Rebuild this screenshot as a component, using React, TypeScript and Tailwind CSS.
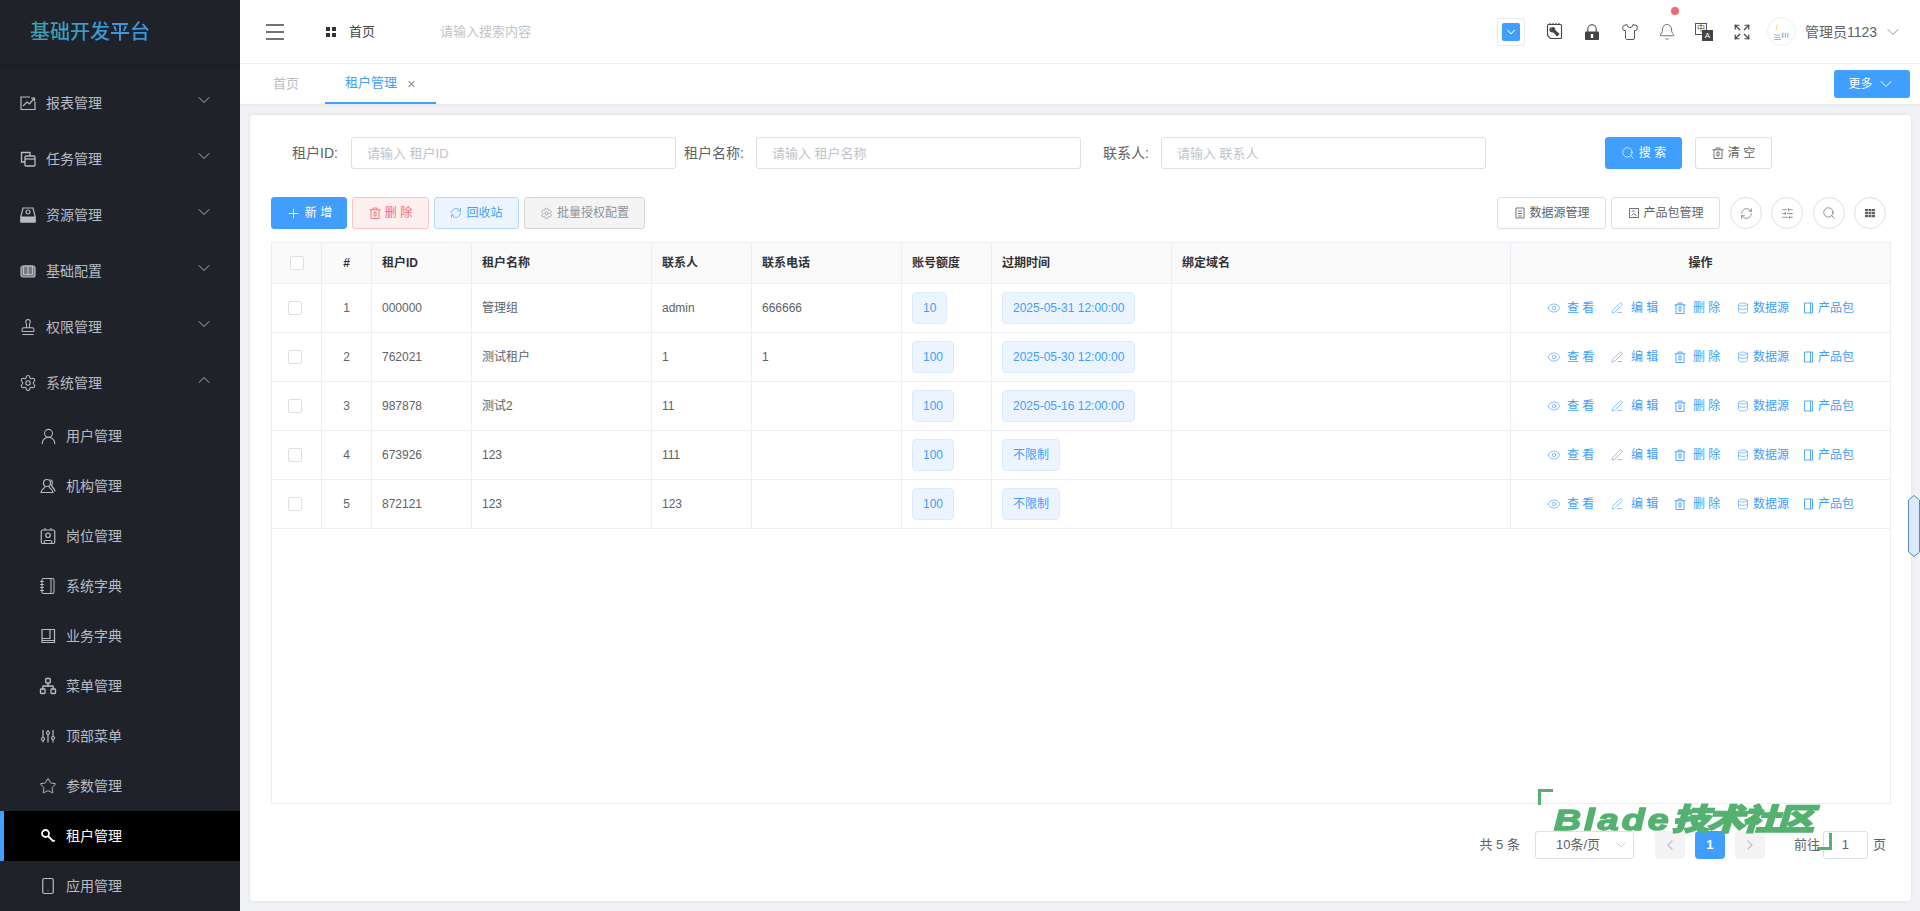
import type { ReactNode } from "react";
import {
  Bell,
  ChevronDown,
  ChevronLeft,
  ChevronRight,
  ChevronUp,
  Contact,
  Database,
  Expand,
  Eye,
  Network,
  Notebook,
  PenLine,
  RefreshCw,
  Search,
  Settings,
  Shirt,
  SlidersHorizontal,
  Smartphone,
  Stamp,
  Star,
  UserRound,
  Plus,
} from "lucide-react";

const ReportIcon = () => (
  <svg viewBox="0 0 16 16" className="w-4 h-4" fill="none" stroke="currentColor" strokeWidth="1.2">
    <path d="M15 7v7.5H1V2h9" />
    <path d="M3 11l4-4 2.5 2L14 3.5M11 3h3.5v3.5" />
  </svg>
);

const TaskIcon = () => (
  <svg viewBox="0 0 16 16" className="w-4 h-4" fill="none" stroke="currentColor" strokeWidth="1.3">
    <path d="M5 11H1.5V1.5H10V5" />
    <rect x="5" y="5" width="10" height="10" rx="1" />
    <path d="M5 8h10" />
  </svg>
);

const ResourceIcon = () => (
  <svg viewBox="0 0 16 16" className="w-4 h-4" fill="none" stroke="currentColor" strokeWidth="1.2">
    <path d="M3 1h10l2 8v6H1V9z" />
    <circle cx="8" cy="5" r="2" />
    <path d="M1 10h14v5H1z" fill="currentColor" />
  </svg>
);

const ConfigIcon = () => (
  <svg viewBox="0 0 16 16" className="w-4 h-4" fill="none" stroke="currentColor" strokeWidth="1.2">
    <rect x="1" y="3" width="14" height="11" rx="2" fill="currentColor" fillOpacity="0.55" />
    <path d="M8 3.5v9M3.5 3h4.5M8 3h4.5v8.5H8 3.5V3" />
  </svg>
);

const OrgIcon = () => (
  <svg viewBox="0 0 16 16" className="w-4 h-4" fill="none" stroke="currentColor" strokeWidth="1.2">
    <circle cx="7" cy="5" r="3.5" />
    <path d="M5 8.5c0 2-4 2.5-4 6h12c0-3.500-4-4-4-6" />
    <path d="M10.5 1.5c2 1 2.5 4 1 6 0 1.500 3.500 2.500 3.500 6" />
  </svg>
);

const BookIcon = () => (
  <svg viewBox="0 0 16 16" className="w-4 h-4" fill="none" stroke="currentColor" strokeWidth="1.2">
    <path d="M2 1.5h12.5v13H2z" />
    <path d="M10 1.5v9H2M2 12.5h12.5" />
  </svg>
);

const TopMenuIcon = () => (
  <svg viewBox="0 0 16 16" className="w-4 h-4" fill="none" stroke="currentColor" strokeWidth="1.2">
    <path d="M3 2v7M3 13v1.5M8 2v1M8 7v7.5M13 2v6M13 12v2.5" />
    <circle cx="3" cy="11" r="1.5" />
    <circle cx="8" cy="5" r="1.5" />
    <circle cx="13" cy="10" r="1.5" />
  </svg>
);

const KeyIcon = () => (
  <svg viewBox="0 0 16 16" className="w-4 h-4" fill="none" stroke="currentColor" strokeWidth="1.8">
    <circle cx="5.5" cy="5.5" r="3.5" />
    <path d="M8 8l5 5 2-.5" />
  </svg>
);

const TrashIcon = ({ className }: { className: string }) => (
  <svg viewBox="0 0 12 12" className={className} fill="none" stroke="currentColor" strokeWidth="0.9">
    <path d="M.5 2.8h11M4 2.8V1h4v1.8M2 2.8v8.700h8V2.800M5 5v4h2V5z" />
  </svg>
);

const MenuIcon = ({ children }: { children: ReactNode }) => (
  <span className="w-4 h-4 shrink-0 flex items-center justify-center">{children}</span>
);

const menuTop = [
  { label: "报表管理", icon: <ReportIcon /> },
  { label: "任务管理", icon: <TaskIcon /> },
  { label: "资源管理", icon: <ResourceIcon /> },
  { label: "基础配置", icon: <ConfigIcon /> },
  { label: "权限管理", icon: <Stamp className="w-[18px] h-[18px] shrink-0" strokeWidth={1.4} /> },
];

const subMenu = [
  { label: "用户管理", icon: <UserRound className="w-[19px] h-[19px] shrink-0" strokeWidth={1.3} /> },
  { label: "机构管理", icon: <OrgIcon /> },
  { label: "岗位管理", icon: <Contact className="w-[18px] h-[18px] shrink-0" strokeWidth={1.6} /> },
  { label: "系统字典", icon: <Notebook className="w-[18px] h-[18px] shrink-0" strokeWidth={1.4} /> },
  { label: "业务字典", icon: <BookIcon /> },
  { label: "菜单管理", icon: <Network className="w-[18px] h-[18px] shrink-0" strokeWidth={1.8} /> },
  { label: "顶部菜单", icon: <TopMenuIcon /> },
  { label: "参数管理", icon: <Star className="w-[18px] h-[18px] shrink-0" strokeWidth={1.3} /> },
  { label: "租户管理", icon: <KeyIcon />, active: true },
  { label: "应用管理", icon: <Smartphone className="w-[18px] h-[18px] shrink-0" strokeWidth={1.6} /> },
];

const rows = [
  { no: 1, id: "000000", name: "管理组", contact: "admin", phone: "666666", quota: "10", expire: "2025-05-31 12:00:00" },
  { no: 2, id: "762021", name: "测试租户", contact: "1", phone: "1", quota: "100", expire: "2025-05-30 12:00:00" },
  { no: 3, id: "987878", name: "测试2", contact: "11", phone: "", quota: "100", expire: "2025-05-16 12:00:00" },
  { no: 4, id: "673926", name: "123", contact: "111", phone: "", quota: "100", expire: "不限制" },
  { no: 5, id: "872121", name: "123", contact: "123", phone: "", quota: "100", expire: "不限制" },
];

function Sidebar() {
  return (
    <div className="w-[240px] h-[911px] shrink-0 bg-[#20222a] text-[#b8bcc3] overflow-hidden">
      <div className="h-16 pl-[30px] flex items-center shadow-[2px_0_6px_rgba(0,0,0,0.25)] relative">
        <span className="text-[20px] font-medium bg-gradient-to-r from-[#3aa3b5] to-[#3f93e6] bg-clip-text text-transparent">
          基础开发平台
        </span>
      </div>
      <div className="pt-[11px]">
        {menuTop.map((m) => (
          <div key={m.label} className="h-14 flex items-center pl-5 pr-[26px]">
            <MenuIcon>{m.icon}</MenuIcon>
            <span className="ml-2.5 text-sm flex-1">{m.label}</span>
            <ChevronDown className="w-5 h-5 -mt-1.5" strokeWidth={1.1} />
          </div>
        ))}
        <div className="h-14 flex items-center pl-5 pr-[26px]">
          <MenuIcon>
            <Settings className="w-[18px] h-[18px] shrink-0" strokeWidth={1.4} />
          </MenuIcon>
          <span className="ml-2.5 text-sm flex-1">系统管理</span>
          <ChevronUp className="w-5 h-5 -mt-1.5" strokeWidth={1.1} />
        </div>
        {subMenu.map((m) => (
          <div
            key={m.label}
            className={`h-[50px] flex items-center ${
              m.active ? "bg-[#000000] text-white border-l-4 border-[#409eff] pl-9" : "pl-10"
            }`}
          >
            <MenuIcon>{m.icon}</MenuIcon>
            <span className="ml-2.5 text-sm">{m.label}</span>
          </div>
        ))}
      </div>
    </div>
  );
}

function Header() {
  return (
    <div className="h-16 shrink-0 bg-white border-b border-[#eef0f3] flex items-center text-[#303133]">
      <svg viewBox="0 0 20 16" className="w-5 h-4 ml-[25px] text-[#444]" fill="none" stroke="currentColor" strokeWidth="1.5">
        <path d="M1 1h18M1 8h18M1 15h18" />
      </svg>
      <div className="ml-[41px] grid grid-cols-2 gap-[2px] w-[10px]">
        <span className="w-1 h-1 bg-[#333]" />
        <span className="w-1 h-1 bg-[#333]" />
        <span className="w-1 h-1 bg-[#333]" />
        <span className="w-1 h-1 bg-[#333]" />
      </div>
      <span className="ml-[13px] text-[13px] text-[#444]">首页</span>
      <span className="ml-[65px] text-[13px] text-[#c0c4cc]">请输入搜索内容</span>

      <div className="ml-auto flex items-center text-[#444]">
        <div className="w-7 h-7 border border-[#e8eaee] rounded-[3px] flex items-center justify-center">
          <div className="w-[18px] h-[18px] bg-[#409eff] rounded-[2px] flex items-center justify-center text-white">
            <ChevronDown className="w-3.5 h-3.5" strokeWidth={1.8} />
          </div>
        </div>
        <svg viewBox="0 0 18 18" className="w-[18px] h-[18px] ml-5" fill="none" stroke="currentColor" strokeWidth="1.1">
          <path d="M2.5 2.5c0-.6.4-1 1-1h12c.6 0 1 .4 1 1v12c0 .6-.4 1-1 1h-10L2.5 12.5z" />
          <path d="M5 0v2M8 0v2M11 0v2M14 0v2" />
          <path d="M6 5l1.500 1.500-1 1-1.500-1.500c-.3 1.500.5 3 2.500 3 .4 0 .8 0 1-.2l3.500 4 1.800-1.800-4-3.500c.5-2-1-3.500-2.800-2.500z" fill="currentColor" />
        </svg>
        <svg viewBox="0 0 14 16" className="w-[14px] h-4 ml-[22px]">
          <path d="M2.8 8V5a4.200 4.200 0 0 1 8.400 0v3" fill="none" stroke="#444" strokeWidth="1.1" />
          <rect x="0" y="7.5" width="14" height="8.5" rx="1" fill="#444" />
          <rect x="5.8" y="10" width="2.4" height="4" fill="#fff" />
        </svg>
        <Shirt className="w-[18px] h-[18px] ml-[22px]" strokeWidth={1.2} />
        <div className="relative ml-[19px]">
          <Bell className="w-[18px] h-[18px]" strokeWidth={1} />
          <span className="absolute -top-[16px] left-[13px] w-2 h-2 rounded-full bg-[#ee6a6f]" />
        </div>
        <div className="relative w-[18px] h-[18px] ml-[19px]">
          <div className="w-3 h-3 border border-[#555] bg-white text-[8px] leading-[10px] text-center">中</div>
          <div className="absolute right-0 bottom-0 w-[11px] h-[11px] bg-[#444] text-white text-[8px] leading-[11px] text-center">A</div>
        </div>
        <Expand className="w-[18px] h-[18px] ml-5" strokeWidth={1.6} />
        <div className="ml-4 w-[29px] h-[29px] rounded-full border border-[#eceef1] flex items-center justify-center">
          <svg viewBox="0 0 24 24" className="w-5 h-5">
            <path d="M7 2c2 3-2 5 0 9-3-3 1-6 0-9z" fill="#e8a04a" />
            <path d="M4 15c2 1 5 1 7 0M4 18c2 1 5 1 7 0M4 21h8" stroke="#7aa7d0" strokeWidth="1" fill="none" />
            <path d="M13 13h2v6h-2zM16.5 13h1.5v6h-1.5zM19.5 13h1.5v6h-1.5z" fill="#9ab8d6" />
          </svg>
        </div>
        <span className="ml-[9px] text-sm text-[#606266]">管理员1123</span>
        <ChevronDown className="w-5 h-5 ml-1.5 mr-[17px] text-[#777]" strokeWidth={1} />
      </div>
    </div>
  );
}

function Tabs() {
  return (
    <div className="h-10 shrink-0 bg-white flex items-center pl-[13px] pr-2.5 shadow-[0_1px_3px_rgba(0,0,0,0.06)]">
      <div className="px-5 h-10 flex items-center text-[13px] text-[#b9bdc5]">首页</div>
      <div className="ml-1.5 pl-5 pr-5 h-10 flex items-center text-[13px] text-[#409eff] border-b-2 border-[#409eff]">
        租户管理
        <span className="ml-2.5 text-[15px] leading-none text-[#8e939c]">×</span>
      </div>
      <button className="ml-auto w-[76px] h-7 bg-[#409eff] rounded-[3px] text-white text-xs flex items-center justify-center gap-[3px]">
        更多
        <ChevronDown className="w-5 h-5" strokeWidth={1.2} />
      </button>
    </div>
  );
}

function Btn({ className, children }: { className: string; children: ReactNode }) {
  return (
    <button className={`h-8 rounded-[3px] border text-xs flex items-center justify-center gap-1 whitespace-nowrap ${className}`}>
      {children}
    </button>
  );
}

function Field({ label, labelClass, placeholder }: { label: string; labelClass: string; placeholder: string }) {
  return (
    <>
      <label className={`text-sm text-[#606266] text-right shrink-0 whitespace-nowrap ${labelClass}`}>{label}</label>
      <input
        readOnly
        placeholder={placeholder}
        className="w-[325px] h-8 shrink-0 border border-[#dcdfe6] rounded-[3px] pl-[15px] text-[13px] outline-none placeholder:text-[#c0c4cc]"
      />
    </>
  );
}

function CircleBtn({ children }: { children: ReactNode }) {
  return (
    <button className="w-8 h-8 rounded-full border border-[#dcdfe6] flex items-center justify-center text-[#606266]">
      {children}
    </button>
  );
}

function Filter() {
  return (
    <div className="flex items-center">
      <Field label="租户ID:" labelClass="w-[67px] mr-[13px]" placeholder="请输入 租户ID" />
      <Field label="租户名称:" labelClass="w-[59px] ml-2 mr-[13px]" placeholder="请输入 租户名称" />
      <Field label="联系人:" labelClass="w-[46px] ml-[22px] mr-3" placeholder="请输入 联系人" />
      <Btn className="ml-[119px] w-[77px] bg-[#409eff] border-[#409eff] text-white">
        <Search className="w-[14px] h-[14px]" strokeWidth={1.3} />
        搜 索
      </Btn>
      <Btn className="ml-[13px] w-[77px] bg-white border-[#dcdfe6] text-[#606266]">
        <TrashIcon className="w-3 h-3" />
        清 空
      </Btn>
    </div>
  );
}

function Toolbar() {
  return (
    <div className="mt-7 flex items-center pr-[5px]">
      <Btn className="w-[76px] bg-[#409eff] border-[#409eff] text-white">
        <Plus className="w-[15px] h-[15px]" strokeWidth={1.3} />
        新 增
      </Btn>
      <Btn className="ml-[5px] w-[77px] bg-[#fef0f0] border-[#fbc4c4] text-[#f56c6c]">
        <TrashIcon className="w-3 h-3" />
        删 除
      </Btn>
      <Btn className="ml-[5px] w-[85px] bg-[#ecf5ff] border-[#b3d8ff] text-[#409eff]">
        <RefreshCw className="w-3 h-3" strokeWidth={1.3} />
        回收站
      </Btn>
      <Btn className="ml-[5px] w-[121px] bg-[#f4f4f5] border-[#d3d4d6] text-[#909399]">
        <Settings className="w-[13px] h-[13px]" strokeWidth={1.3} />
        批量授权配置
      </Btn>
      <Btn className="ml-auto w-[109px] bg-white border-[#dcdfe6] text-[#606266]">
        <svg viewBox="0 0 12 12" className="w-3 h-3" fill="none" stroke="currentColor" strokeWidth="0.9">
          <path d="M2 1h8v10H2zM4 4h4M4 6.5h4M4 9h4" />
        </svg>
        数据源管理
      </Btn>
      <Btn className="ml-[5px] w-[109px] bg-white border-[#dcdfe6] text-[#606266]">
        <svg viewBox="0 0 12 12" className="w-3 h-3" fill="none" stroke="currentColor" strokeWidth="0.9">
          <path d="M1.5 1.5h9v9h-9zM3.5 4h3M3.5 8.5l2-2 3 2" />
        </svg>
        产品包管理
      </Btn>
      <div className="ml-2.5 flex gap-[9.33px]">
        <CircleBtn>
          <RefreshCw className="w-[13px] h-[13px]" strokeWidth={1.2} />
        </CircleBtn>
        <CircleBtn>
          <SlidersHorizontal className="w-[13px] h-[13px]" strokeWidth={1.2} />
        </CircleBtn>
        <CircleBtn>
          <Search className="w-[14px] h-[14px]" strokeWidth={1.2} />
        </CircleBtn>
        <CircleBtn>
          <svg viewBox="0 0 12 12" className="w-3 h-3" fill="currentColor">
            <path d="M1 2h3v2.3H1zM4.5 2h3v2.3h-3zM8 2h3v2.3H8zM1 5h3v2.3H1zM4.5 5h3v2.3h-3zM8 5h3v2.3H8zM1 8h3v2.3H1zM4.5 8h3v2.3h-3zM8 8h3v2.3H8z" />
          </svg>
        </CircleBtn>
      </div>
    </div>
  );
}

function Actions() {
  return (
    <div className="flex items-center pl-9 text-xs text-[#409eff]">
      <Eye className="w-[14px] h-[14px]" strokeWidth={1.1} />
      <span className="ml-1.5 w-7 whitespace-nowrap">查 看</span>
      <PenLine className="w-3 h-3 ml-4" strokeWidth={1.2} />
      <span className="ml-2 w-7 whitespace-nowrap">编 辑</span>
      <TrashIcon className="w-3 h-3 ml-[15px]" />
      <span className="ml-[7px] w-7 whitespace-nowrap">删 除</span>
      <Database className="w-3 h-3 ml-4" strokeWidth={1.2} />
      <span className="ml-1 w-9 whitespace-nowrap">数据源</span>
      <svg viewBox="0 0 12 12" className="w-3 h-3 ml-3.5" fill="none" stroke="currentColor" strokeWidth="0.9">
        <path d="M1.5 1h8v10h-8zM7.5 1v10" />
      </svg>
      <span className="ml-[3px] w-9 whitespace-nowrap">产品包</span>
    </div>
  );
}

function Tag({ text }: { text: string }) {
  return (
    <span className="inline-block h-8 leading-[30px] px-2.5 bg-[#ecf5ff] border border-[#d9ecff] rounded text-xs text-[#409eff]">
      {text}
    </span>
  );
}

function TenantTable() {
  const th = "h-[41px] bg-[#fafafa] border-b border-r border-[#ebeef5] text-xs font-bold text-[#303133] text-left px-2.5";
  const td = "h-[49px] border-b border-r border-[#ebeef5] text-xs text-[#606266] px-2.5";
  return (
    <div className="mt-[13px] h-[562px] border border-[#ebeef5]">
      <table className="w-full table-fixed border-separate border-spacing-0">
        <colgroup>
          <col className="w-[50px]" />
          <col className="w-[50px]" />
          <col className="w-[100px]" />
          <col className="w-[180px]" />
          <col className="w-[100px]" />
          <col className="w-[150px]" />
          <col className="w-[90px]" />
          <col className="w-[180px]" />
          <col className="w-[339px]" />
          <col />
        </colgroup>
        <thead>
          <tr>
            <th className={`${th} !px-0`}>
              <span className="block mx-auto w-[14px] h-[14px] bg-white border border-[#dcdfe6] rounded-[2px]" />
            </th>
            <th className={`${th} !text-center`}>#</th>
            <th className={th}>租户ID</th>
            <th className={th}>租户名称</th>
            <th className={th}>联系人</th>
            <th className={th}>联系电话</th>
            <th className={th}>账号额度</th>
            <th className={th}>过期时间</th>
            <th className={th}>绑定域名</th>
            <th className={`${th} !text-center !border-r-0`}>操作</th>
          </tr>
        </thead>
        <tbody>
          {rows.map((r) => (
            <tr key={r.no}>
              <td className={`${td} !px-0`}>
                <span className="block ml-4 w-[14px] h-[14px] bg-white border border-[#dcdfe6] rounded-[2px]" />
              </td>
              <td className={`${td} text-center`}>{r.no}</td>
              <td className={td}>{r.id}</td>
              <td className={td}>{r.name}</td>
              <td className={td}>{r.contact}</td>
              <td className={td}>{r.phone}</td>
              <td className={td}>
                <Tag text={r.quota} />
              </td>
              <td className={td}>
                <Tag text={r.expire} />
              </td>
              <td className={td} />
              <td className={`${td} !px-0 !border-r-0`}>
                <Actions />
              </td>
            </tr>
          ))}
        </tbody>
      </table>
    </div>
  );
}

function Pagination() {
  const nav = "w-[30px] h-7 ml-2.5 bg-[#f4f4f5] rounded-sm flex items-center justify-center text-[#c0c4cc]";
  return (
    <div className="mt-[27px] flex items-center justify-end pr-[5px] text-[13px] text-[#606266]">
      <span>共 5 条</span>
      <div className="ml-[15px] w-[99px] h-7 border border-[#dcdfe6] rounded-[3px] flex items-center pl-5 pr-[4px] justify-between">
        <span>10条/页</span>
        <ChevronDown className="w-4 h-4 text-[#c0c4cc]" strokeWidth={1.2} />
      </div>
      <div className={`${nav} !ml-[21px]`}>
        <ChevronLeft className="w-4 h-4" strokeWidth={2} />
      </div>
      <div className={`${nav} !bg-[#409eff] !text-white font-bold`}>1</div>
      <div className={nav}>
        <ChevronRight className="w-4 h-4" strokeWidth={2} />
      </div>
      <span className="ml-[29px]">前往</span>
      <div className="ml-[3px] w-[45px] h-7 border border-[#dcdfe6] rounded-[3px] flex items-center justify-center">1</div>
      <span className="ml-[5px]">页</span>
    </div>
  );
}

export default function App() {
  return (
    <div className="relative w-[1920px] h-[911px] overflow-hidden flex font-['Liberation_Sans','Noto_Sans_CJK_SC',sans-serif] bg-[#f0f2f5]">
      <Sidebar />
      <div className="flex-1 flex flex-col min-w-0">
        <Header />
        <Tabs />
        <div className="flex-1 pl-2.5 pr-[9px] pt-[11px] pb-[10px] min-h-0">
          <div className="h-full bg-white rounded-[3px] shadow-[0_0_4px_rgba(0,0,0,0.08)] pl-[21px] pr-5 pt-[22px]">
            <Filter />
            <Toolbar />
            <TenantTable />
            <Pagination />
          </div>
        </div>
      </div>

      {/* watermark */}
      <div className="absolute left-[1538px] top-[789px] w-[15px] h-4 border-t-[3px] border-l-[3px] border-[#55b16f] pointer-events-none" />
      <div className="absolute left-[1554px] top-[801px] origin-left scale-x-[1.25] whitespace-nowrap text-[30px] leading-[38px] font-black italic text-[#55b16f] [-webkit-text-stroke:1.5px_#55b16f] pointer-events-none">
        <span className="tracking-[2.5px]">Blade</span>
        <span className="tracking-[-2px]">技术社区</span>
      </div>
      <div className="absolute left-[1817px] top-[833px] w-[15px] h-[17px] border-b-[3px] border-r-[3px] border-[#55b16f] pointer-events-none" />

      {/* side handle */}
      <svg viewBox="0 0 12 62" className="absolute right-0 top-[495px] w-3 h-[62px]">
        <path d="M6 .5L11.5 5v52L6 61.5.5 57V5z" fill="#dbe9fb" stroke="#5a8ac4" />
      </svg>
    </div>
  );
}
